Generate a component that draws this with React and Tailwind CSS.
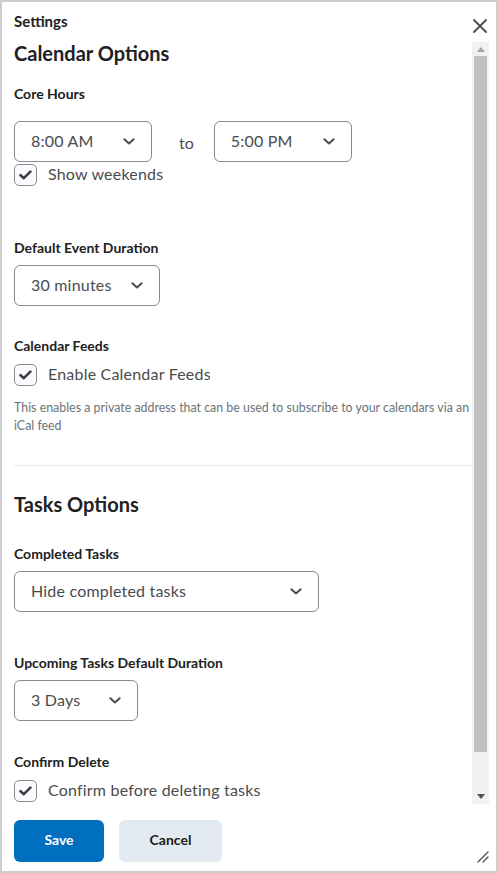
import React from "react";

function Chevron() {
  return (
    <svg width="12" height="7" viewBox="0 0 12 7" fill="none">
      <path d="M1.3 1.3L6 5.5L10.7 1.3" stroke="#494c4e" strokeWidth="2" strokeLinecap="round" strokeLinejoin="round" />
    </svg>
  );
}

function Select({ value, width }) {
  return (
    <div
      className={`h-[41px] ${width} border border-[#868c8f] rounded-[6px] bg-white flex items-center justify-between pl-[16px] pr-[16px] text-[16px] tracking-[0.2px] text-[#494c4e]`}
    >
      <span className="-mt-[1px]">{value}</span>
      <Chevron />
    </div>
  );
}

function Checkbox({ label }) {
  return (
    <div className="flex items-start gap-[11px]">
      <div className="w-[23px] h-[22px] border border-[#868c8f] rounded-[5px] bg-[#f9fbff] flex items-center justify-center shrink-0">
        <svg width="13" height="10" viewBox="0 0 13 10" fill="none">
          <path d="M1.6 5.2L4.8 8.2L11.4 1.6" stroke="#3d4042" strokeWidth="2.6" strokeLinecap="round" strokeLinejoin="round" />
        </svg>
      </div>
      <span className="text-[16px] leading-[20px] tracking-[0.2px] text-[#494c4e]">{label}</span>
    </div>
  );
}

function Label({ children, className = "" }) {
  return <div className={`text-[14px] leading-[20px] font-bold text-[#202122] ${className}`}>{children}</div>;
}

export default function App() {
  return (
    <div className="w-[498px] h-[873px] border-2 border-[#cdcdcd] bg-white flex flex-col relative overflow-hidden font-['Lato',sans-serif]">
      <div className="h-[38px] flex items-start justify-between pl-[12px] pr-[9px] pt-[9px] shrink-0">
        <div className="text-[15px] leading-[20px] font-bold text-[#202122]">Settings</div>
        <svg className="mt-[8px]" width="14" height="14" viewBox="0 0 14 14" fill="none">
          <path d="M1 1L13 13M13 1L1 13" stroke="#494c4e" strokeWidth="1.8" strokeLinecap="round" />
        </svg>
      </div>

      <div className="h-[764px] flex shrink-0 pr-[7px]">
        <div className="flex-1 overflow-hidden pl-[12px]">
          <div className="text-[20px] leading-[26px] font-bold text-[#202122]">Calendar Options</div>

          <Label className="mt-[18px]">Core Hours</Label>
          <div className="mt-[17px] flex items-center">
            <Select value="8:00 AM" width="w-[138px]" />
            <span className="ml-[27px] mr-[20px] mt-[2px] text-[16px] text-[#494c4e]">to</span>
            <Select value="5:00 PM" width="w-[138px]" />
          </div>
          <div className="mt-[2px]">
            <Checkbox label="Show weekends" />
          </div>

          <Label className="mt-[52px]">Default Event Duration</Label>
          <div className="mt-[7px]">
            <Select value="30 minutes" width="w-[146px]" />
          </div>

          <Label className="mt-[30px]">Calendar Feeds</Label>
          <div className="mt-[8px]">
            <Checkbox label="Enable Calendar Feeds" />
          </div>
          <p className="mt-[13px] text-[12.4px] leading-[18px] text-[#6e7376]">
            This enables a private address that can be used to subscribe to your calendars via an iCal feed
          </p>

          <div className="mt-[30px] h-px bg-[#e3e9f1]" />

          <div className="mt-[25px] text-[20px] leading-[26px] font-bold text-[#202122]">Tasks Options</div>

          <Label className="mt-[27px]">Completed Tasks</Label>
          <div className="mt-[7px]">
            <Select value="Hide completed tasks" width="w-[305px]" />
          </div>

          <Label className="mt-[41px]">Upcoming Tasks Default Duration</Label>
          <div className="mt-[7px]">
            <Select value="3 Days" width="w-[124px]" />
          </div>

          <Label className="mt-[31px]">Confirm Delete</Label>
          <div className="mt-[8px]">
            <Checkbox label="Confirm before deleting tasks" />
          </div>
        </div>

        <div className="w-[17px] mt-[2px] bg-[#f1f1f1] flex flex-col shrink-0">
          <div className="h-[14px] flex items-center justify-center">
            <svg width="8" height="5" viewBox="0 0 8 5">
              <path d="M0 5L4 0L8 5Z" fill="#a3a3a3" />
            </svg>
          </div>
          <div className="mx-[2px] h-[696px] bg-[#c1c1c1]" />
          <div className="flex-1 flex items-end justify-center pb-[5px]">
            <svg width="8" height="5" viewBox="0 0 8 5">
              <path d="M0 0L8 0L4 5Z" fill="#505050" />
            </svg>
          </div>
        </div>
      </div>

      <div className="mt-[16px] pl-[12px] flex gap-[15px]">
        <button className="w-[90px] h-[42px] pb-[4px] rounded-[6px] bg-[#006fbf] text-white text-[14px] font-bold">Save</button>
        <button className="w-[103px] h-[42px] pb-[4px] rounded-[6px] bg-[#e3e9f1] text-[#202122] text-[14px] font-bold">Cancel</button>
      </div>

      <svg className="absolute right-[7px] bottom-[8px]" width="12" height="12" viewBox="0 0 12 12" fill="none">
        <path d="M1 11L11 1M6 11L11 6" stroke="#494c4e" strokeWidth="1.3" strokeLinecap="round" />
      </svg>
    </div>
  );
}
